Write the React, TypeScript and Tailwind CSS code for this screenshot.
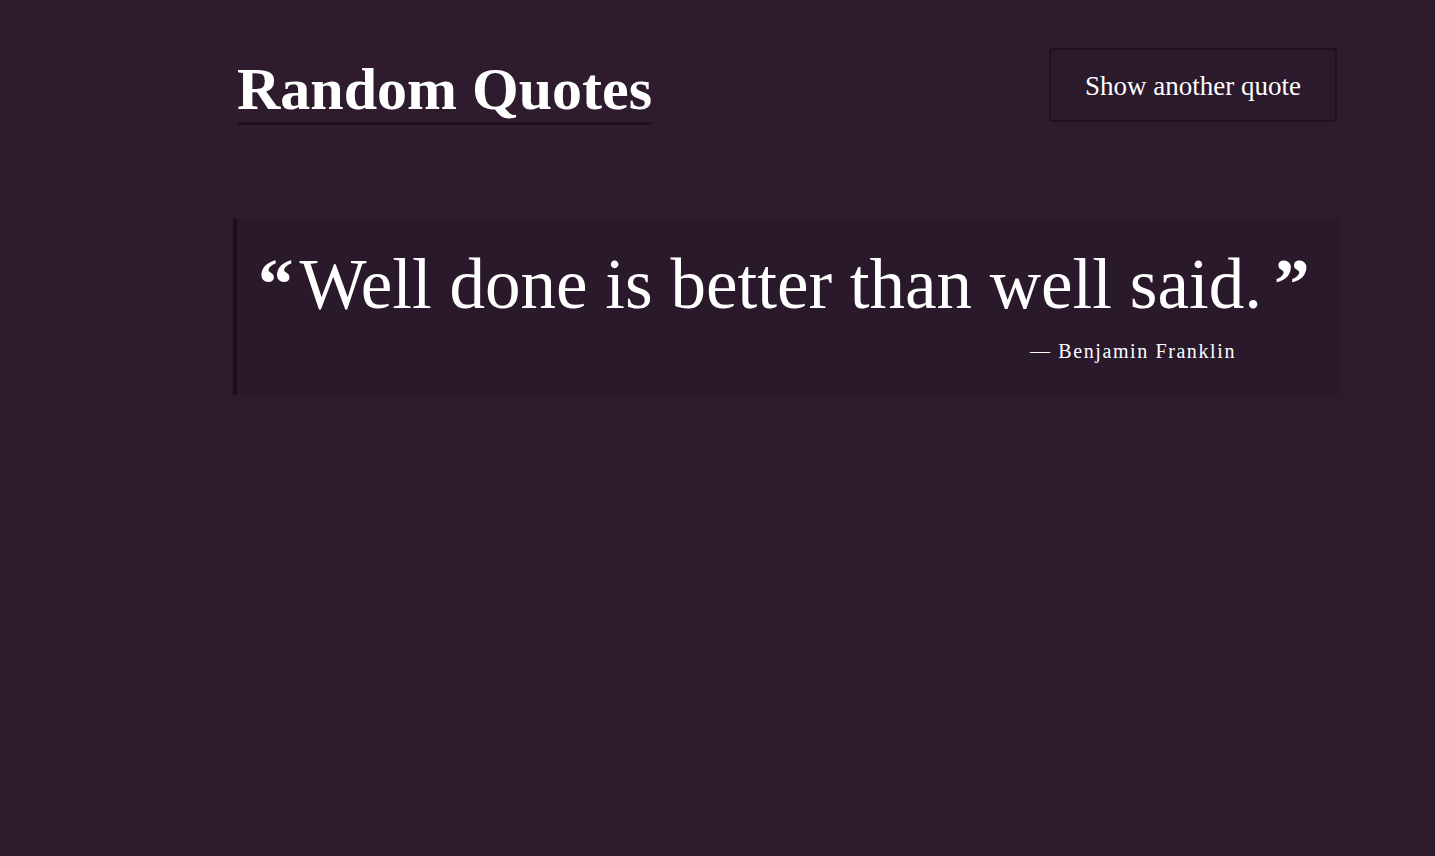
import React from "react";

const quote = {
  text: "Well done is better than well said.",
  author: "Benjamin Franklin",
};

export default function App() {
  return (
    <div className="min-h-screen bg-[#2e1b2e] font-['Liberation_Serif',serif] text-white">
      <div className="ml-[233px] w-[1108px] pt-[48px]">
        <header className="flex items-start justify-between px-1">
          <h1 className="border-b-[3px] border-[#1a1020] pt-[8px] text-[60px] font-bold leading-[66px]">
            Random Quotes
          </h1>
          <button className="h-[74px] w-[288px] rounded border-2 border-[#1e1220] bg-[#2a1a2c] pt-[3px] text-[27px] text-white">
            Show another quote
          </button>
        </header>

        <blockquote className="mt-[93px] h-[177px] rounded-r border-l-4 border-[#1a0f1c] bg-[#29192b] pl-[21px] pt-[26px]">
          <p className="whitespace-nowrap text-[71px] leading-[80px]">
            <span className="mr-[6px] font-bold">“</span>
            {quote.text}
            <span className="ml-[12px] font-bold">”</span>
          </p>
          <div className="mt-[15px] flex justify-end pr-[105px] text-[20px] leading-[24px] tracking-[1.6px]">
            — {quote.author}
          </div>
        </blockquote>
      </div>
    </div>
  );
}
